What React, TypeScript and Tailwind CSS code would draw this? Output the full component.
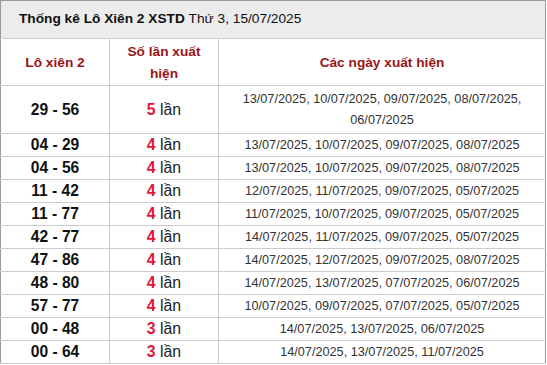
import React from 'react';

type Row = { pair: string; count: number; dates: string[] };

const rows: Row[] = [
  { pair: '29 - 56', count: 5, dates: ['13/07/2025', '10/07/2025', '09/07/2025', '08/07/2025', '06/07/2025'] },
  { pair: '04 - 29', count: 4, dates: ['13/07/2025', '10/07/2025', '09/07/2025', '08/07/2025'] },
  { pair: '04 - 56', count: 4, dates: ['13/07/2025', '10/07/2025', '09/07/2025', '08/07/2025'] },
  { pair: '11 - 42', count: 4, dates: ['12/07/2025', '11/07/2025', '09/07/2025', '05/07/2025'] },
  { pair: '11 - 77', count: 4, dates: ['11/07/2025', '10/07/2025', '09/07/2025', '05/07/2025'] },
  { pair: '42 - 77', count: 4, dates: ['14/07/2025', '11/07/2025', '09/07/2025', '05/07/2025'] },
  { pair: '47 - 86', count: 4, dates: ['14/07/2025', '12/07/2025', '09/07/2025', '08/07/2025'] },
  { pair: '48 - 80', count: 4, dates: ['14/07/2025', '13/07/2025', '07/07/2025', '06/07/2025'] },
  { pair: '57 - 77', count: 4, dates: ['10/07/2025', '09/07/2025', '07/07/2025', '05/07/2025'] },
  { pair: '00 - 48', count: 3, dates: ['14/07/2025', '13/07/2025', '06/07/2025'] },
  { pair: '00 - 64', count: 3, dates: ['14/07/2025', '13/07/2025', '11/07/2025'] },
];

export default function App() {
  return (
    <div className="w-[547px] h-[365px] bg-white overflow-hidden font-['Liberation_Sans',Arial,sans-serif]">
      <table className="w-[546px] table-fixed border-collapse border border-[#9a9a9a] text-center">
        <colgroup>
          <col className="w-[109px]" />
          <col className="w-[109px]" />
          <col />
        </colgroup>
        <thead>
          {/* Title */}
          <tr className="h-[38px] bg-[#ececec]">
            <th colSpan={3} className="border border-[#cccccc] border-l-[#9a9a9a] border-r-[#9a9a9a] border-t-[#9a9a9a] pl-[18px] text-left text-[13.7px] text-[#111]">
              <span className="font-bold">Thống kê Lô Xiên 2 XSTD</span>{' '}
              <span className="font-normal">Thứ 3, 15/07/2025</span>
            </th>
          </tr>
          <tr className="h-[46px]">
            <th className="border border-[#cccccc] border-l-[#9a9a9a] pt-[2px] text-[13.7px] font-bold text-[#9b1515] leading-[22px]">Lô xiên 2</th>
            <th className="border border-[#cccccc] px-2 pt-[2px] text-[13.7px] font-bold text-[#9b1515] leading-[22px]">Số lần xuất hiện</th>
            <th className="border border-[#cccccc] border-r-[#9a9a9a] pt-[2px] text-[13.7px] font-bold text-[#9b1515] leading-[22px]">Các ngày xuất hiện</th>
          </tr>
        </thead>
        <tbody>
          {rows.map((r, i) => (
            <tr key={r.pair + i} className={i === 0 ? 'h-[48px]' : 'h-[23px]'}>
              <td className="border border-[#cccccc] border-l-[#9a9a9a] p-0 text-[15.6px] font-bold text-[#111] leading-[22px]">{r.pair}</td>
              <td className="border border-[#cccccc] p-0 text-[15.8px] text-[#222] leading-[22px]">
                <span className="font-bold text-[#e3173a]">{r.count}</span> lần
              </td>
              <td className="border border-[#cccccc] border-r-[#9a9a9a] px-2 py-0 text-[12.7px] text-[#333] leading-[21px]">
                {r.dates.map((d, j) => (
                  <React.Fragment key={d}>
                    {d}
                    {(j < r.dates.length - 1 || (i === 0 && j === 3)) && <span className="text-[#3c3c8c]">, </span>}
                  </React.Fragment>
                ))}
              </td>
            </tr>
          ))}
        </tbody>
      </table>
    </div>
  );
}
